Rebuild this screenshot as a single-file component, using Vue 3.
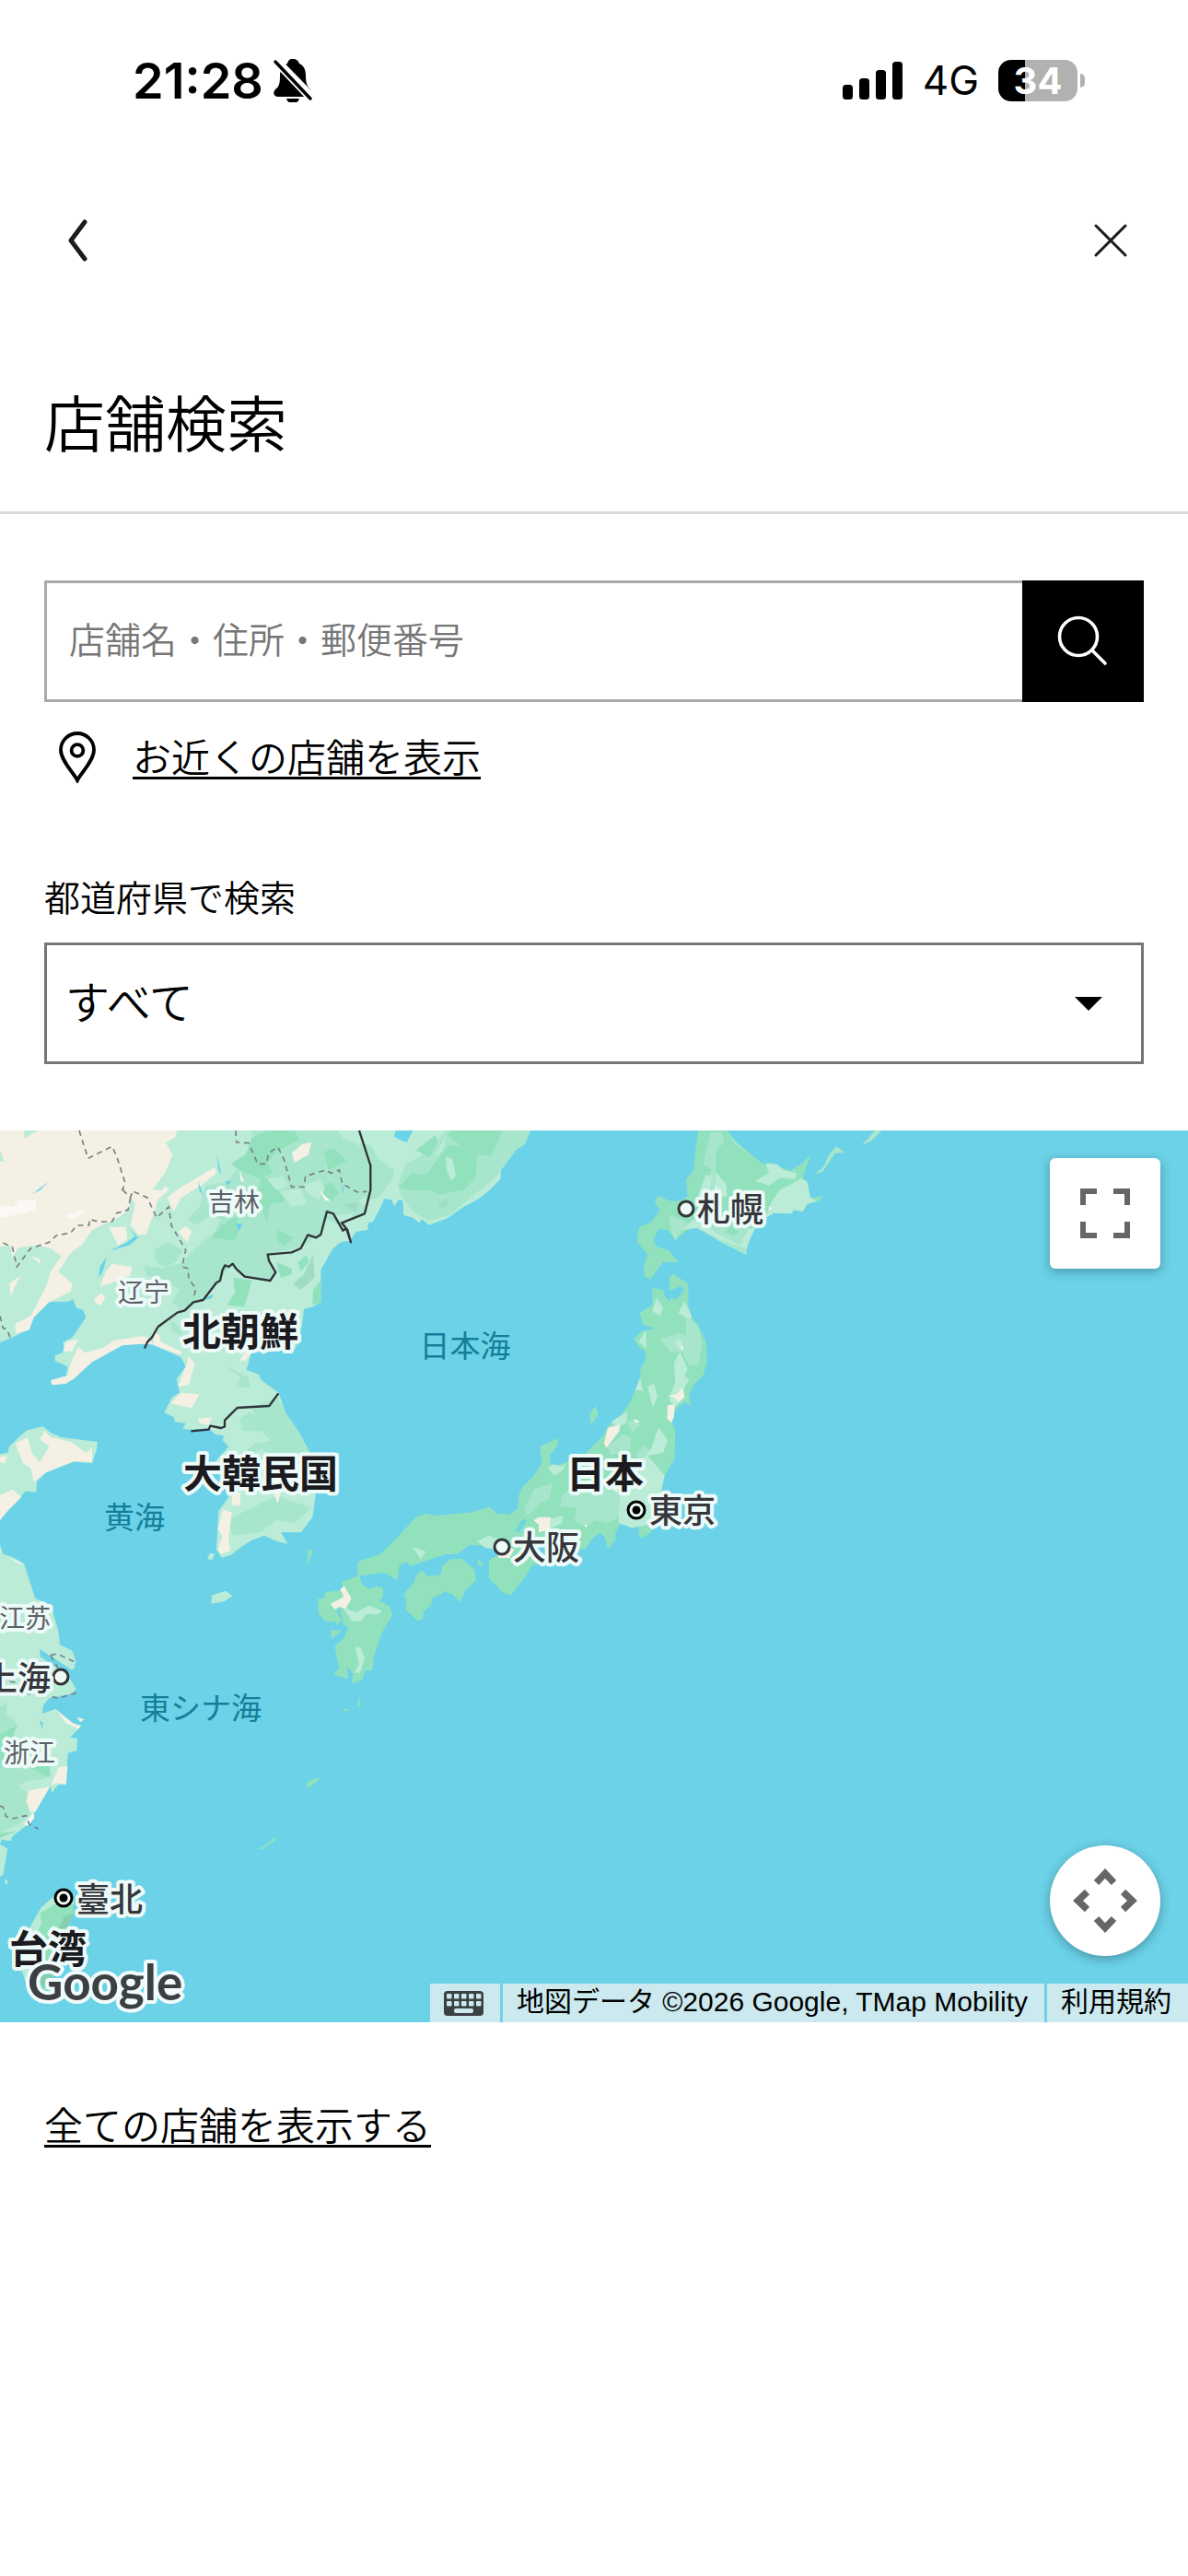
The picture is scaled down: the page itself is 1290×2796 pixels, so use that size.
<script setup>
    import { ref } from 'vue';

    const keyword = ref('');
    const prefecture = ref('all');

    // Столбики уровня сигнала
    const signalBars = [16, 23, 32, 41];

    // Подписи на карте: тип определяет размер и цвет
    const labels = [
        { text: '吉林', x: 254, y: 88, type: 'province' },
        { text: '辽宁', x: 156, y: 186, type: 'province' },
        { text: '江苏', x: 27, y: 540, type: 'province' },
        { text: '浙江', x: 32, y: 686, type: 'province' },
        { text: '日本海', x: 505, y: 246, type: 'sea' },
        { text: '黄海', x: 146, y: 432, type: 'sea' },
        { text: '東シナ海', x: 218, y: 639, type: 'sea' },
        { text: '札幌', x: 793, y: 99, type: 'city' },
        { text: '東京', x: 741, y: 426, type: 'city' },
        { text: '大阪', x: 593, y: 466, type: 'city' },
        { text: '上海', x: 19, y: 608, type: 'city' },
        { text: '臺北', x: 119, y: 848, type: 'city' },
        { text: '北朝鮮', x: 261, y: 234, type: 'country' },
        { text: '大韓民国', x: 283, y: 388, type: 'country' },
        { text: '日本', x: 657, y: 388, type: 'country' },
        { text: '台湾', x: 52, y: 904, type: 'country' },
    ];

    const cities = [
        { x: 745, y: 85 },
        { x: 545, y: 452 },
        { x: 66, y: 593 },
    ];
    const capitals = [
        { x: 691, y: 412 },
        { x: 69, y: 833 },
    ];
</script>

<template>
    <div class="page">
        <div class="status">
            <div class="status-left">
                <span class="time">21:28</span>
                <svg width="44" height="48" viewBox="0 0 44 48" aria-hidden="true">
                    <path d="M22 1C26 1 28 3 29 6C34 8 36 13 36 19C36 28 38 31 41 34C44 38 42 42 38 42H6C1 42 0 37 3 34C7 31 8 28 8 19C8 13 11 8 16 6C17 3 18 1 22 1Z" fill="#000" />
                    <path d="M15 44H29C28 48 25 49 22 49C19 49 16 48 15 44Z" fill="#000" />
                    <path d="M5 1L46 43" stroke="#fff" stroke-width="5" />
                    <path d="M3 4L41 44" stroke="#fff" stroke-width="7" />
                    <path d="M3 4L41 44" stroke="#000" stroke-width="3.5" stroke-linecap="round" />
                </svg>
            </div>
            <div class="status-right">
                <svg width="66" height="42" viewBox="0 0 66 42" aria-hidden="true">
                    <rect v-for="(h, i) in signalBars" :key="i" :x="i * 18" :y="42 - h" width="11" :height="h" rx="3.5" />
                </svg>
                <span class="network">4G</span>
                <div class="battery">
                    <div class="battery-body">34</div>
                    <div class="battery-tip"></div>
                </div>
            </div>
        </div>

        <nav class="nav">
            <button type="button" aria-label="戻る">
                <svg width="24" height="48" viewBox="0 0 24 48" aria-hidden="true">
                    <path d="M20 4L5 24L20 44" fill="none" stroke="#1c1c1c" stroke-width="5" stroke-linecap="round" stroke-linejoin="round" />
                </svg>
            </button>
            <button type="button" aria-label="閉じる">
                <svg width="36" height="36" viewBox="0 0 36 36" aria-hidden="true">
                    <path d="M2 2L34 34M34 2L2 34" stroke="#1c1c1c" stroke-width="3" stroke-linecap="round" />
                </svg>
            </button>
        </nav>

        <h1>店舗検索</h1>

        <main>
            <form class="search" @submit.prevent>
                <input v-model="keyword" type="text" placeholder="店舗名・住所・郵便番号" aria-label="店舗名・住所・郵便番号">
                <button type="submit" aria-label="検索">
                    <svg width="56" height="56" viewBox="0 0 56 56" aria-hidden="true">
                        <g fill="none" stroke="#fff" stroke-width="3.6" stroke-linecap="round">
                            <circle cx="23" cy="23" r="20.5" />
                            <path d="M38 38L52 52" />
                        </g>
                    </svg>
                </button>
            </form>

            <div class="nearby">
                <svg width="42" height="56" viewBox="0 0 42 56" aria-hidden="true">
                    <g fill="none" stroke="#000" stroke-width="3.8">
                        <path d="M21 53C18 46 3 32 3 20A18 18 0 0 1 39 20C39 32 24 46 21 53Z" />
                        <circle cx="21" cy="20.5" r="6.4" />
                    </g>
                </svg>
                <a href="#">お近くの店舗を表示</a>
            </div>

            <label class="label" for="prefecture">都道府県で検索</label>
            <div class="select">
                <select id="prefecture" v-model="prefecture">
                    <option value="all">すべて</option>
                </select>
                <svg width="30" height="15" viewBox="0 0 30 15" aria-hidden="true"><path d="M0 0H30L15 15Z" /></svg>
            </div>
        </main>

        <section class="map">
            <svg class="canvas" viewBox="0 0 1290 968" preserveAspectRatio="xMidYMid slice">
                <g transform="scale(.33333)">
                    <!-- Материк и Корейский полуостров -->
                    <g transform="translate(0 -21)">
                        <path class="land" d="M0 21H1727L1710 65L1680 85L1655 120L1632 150L1630 180L1590 220L1560 243L1510 270L1460 305L1430 317L1397 329L1375 310L1365 322L1345 305L1315 297L1312 250L1300 245L1285 268L1275 247L1252 243L1240 270L1215 318L1200 322L1197 345L1160 350L1140 380L1110 385L1085 405L1045 475L1045 580L1020 595L990 603L985 650L975 700L960 735L820 740L803 800L843 815L852 835L908 875L930 940L975 1005L1007 1065L1010 1090L1028 1210L1018 1280L980 1330L915 1330L938 1368L905 1360L860 1340L820 1355L790 1375L750 1405L722 1412L705 1385L712 1260L745 1215L720 1160L700 1100L745 1050L725 1030L730 1015L700 1010L680 990L625 995L595 993L605 975L570 970L567 955L535 940L560 890L585 875L575 830L605 790L590 760L500 720L470 715L400 720L300 775L240 825L215 845L170 850L165 835L215 820L220 790L180 772L178 755L210 740L205 710L235 695L280 630L270 605L250 600L237 570L225 578L160 580L110 630L95 670L50 690L0 712Z" />
                        <path class="land" d="M0 1075L25 1070L30 1050L85 998L140 985L165 1005L200 1020L318 1035L315 1060L300 1105L240 1100L150 1135L120 1165L118 1200L85 1195L60 1220L20 1265L0 1290Z" />
                        <path class="land" d="M675 1415L685 1397L700 1400L690 1420Z" />
                        <!-- Леса -->
                        <path class="mid" d="M820 21H1100L1120 50L1160 60L1200 120L1205 220L1170 250L1200 280L1110 330L1060 310L1040 360L980 400L870 425L895 480L870 510L790 495L750 460L715 510L660 575L590 605L560 580L585 540L520 500L480 495L465 460L530 470L600 450L620 420L700 350L720 310L680 300L640 330L610 310L650 270L670 200L740 190L770 150L755 125L800 100L820 70Z" />
                        <path class="mid" d="M500 410L545 385L595 410L570 450L540 470L510 450ZM555 640L585 660L590 690L560 670ZM760 370L800 360L805 390L775 400ZM1170 60L1210 70L1230 110L1285 150L1280 180L1230 240L1195 250Z" />
                        <path class="mid" d="M905 890L930 940L975 1005L1007 1065L900 1080L850 1060L780 1080L830 1040L880 1030L850 1000L790 1000L780 960L850 910ZM740 1290L820 1250L900 1210L1015 1250L960 1300L900 1290L850 1330L760 1340ZM730 785L810 825L815 860L770 855L785 825Z" />
                        <path class="green" d="M820 45L870 21H960L975 50L900 90L870 130L890 160L860 170L910 220L960 225L920 255L880 260L870 320L840 240L850 180L800 160L755 130L800 100ZM720 330L770 300L780 340L765 380L690 370ZM760 500L820 510L810 550L795 595L740 590L765 550ZM905 345L955 370L925 400L900 375ZM900 450L950 470L950 490L915 500ZM1055 90L1090 80L1130 120L1070 150ZM1050 200L1080 190L1105 225L1080 250L1055 230ZM970 450L1000 425L1005 450L980 480ZM1020 540L1045 510L1045 580L1018 590Z" />
                        <path class="shade" d="M955 520L990 490L1020 425L1025 500L980 540ZM1120 260L1165 255L1160 290Z" />
                        <path class="land" d="M870 180L920 170L940 205L900 215ZM990 200L1040 180L1060 210L1040 245L1000 225ZM1085 300L1150 290L1130 330ZM910 220L980 210L1000 260L950 270Z" />
                        <!-- Русское побережье -->
                        <path class="mid" d="M1450 21H1727L1710 65L1680 85L1655 120L1632 150L1610 180L1550 225L1470 295L1400 315L1350 290L1310 240L1295 200L1320 130L1400 90Z" />
                        <path class="green" d="M1455 35L1470 21H1637L1600 105L1555 100L1550 175L1510 215L1430 230L1400 215L1330 215L1300 205L1340 160L1390 165L1460 70L1500 70ZM1355 85L1420 35L1425 60L1400 110Z" />
                        <path class="land" d="M1452 105L1475 115L1485 170L1470 185L1455 150ZM1400 110L1440 90L1455 30L1430 80L1390 130Z" />
                        <path class="shade" d="M1430 260L1460 240L1455 265L1430 275Z" />
                        <!-- Степь и сухие районы -->
                        <path class="sand" d="M0 21H577L570 45L540 60L562 100L540 155L497 213L525 215L540 202L550 215L515 245L500 295L475 360L450 360L425 330L440 260L425 235L420 280L385 305L300 345L270 390L230 420L190 480L235 520L230 545L160 580L110 630L95 670L50 682L50 650L100 625L150 530L165 480L200 430L165 405L125 395L60 402L40 435L0 460Z" />
                        <path class="land" d="M77 21H123L80 48ZM0 85L15 125L0 120ZM0 400L35 395L40 440L0 470Z" />
                        <path class="sand" d="M545 240L575 215L700 140L705 160L655 200L590 240L565 285ZM950 95L985 65L1015 60L1005 100L960 125ZM580 350L605 333L625 350L610 385ZM355 335L410 335L415 375L385 395ZM365 455L430 465L425 495L325 530L345 480ZM308 570L330 550L342 565L330 590L310 583ZM100 430L130 440L130 455ZM30 520L65 495L35 560ZM500 675L520 690L525 710L590 740L590 752L500 720ZM205 740L215 710L255 700L235 740ZM470 690L500 715L400 720L300 775L240 830L215 845L170 850L165 835L220 820L230 780L255 725L275 745L335 730L370 705ZM615 757L635 780L615 850L580 855L605 790ZM555 910L590 875L650 880L625 925ZM645 960L690 955L680 980L650 975ZM780 770L800 740L820 745L800 770ZM725 1255L755 1265L745 1350L750 1390L720 1400L710 1385L725 1340L710 1320ZM755 1200H785L780 1245L755 1240ZM890 1200H915L905 1235Z" />
                        <path class="sand" d="M50 1040L90 1020L105 1075L130 1100L160 1050L130 1025L145 1000L165 1020L230 1035L280 1070L300 1055L300 1100L240 1097L150 1135L110 1165L100 1120L75 1105ZM0 1085L25 1078L15 1105L0 1100ZM0 1210L40 1190L70 1215L20 1265L0 1290Z" />
                        <path class="snow" d="M0 265L45 270L60 248L120 250L115 280L70 292L0 305ZM210 300L260 280L275 285L240 310ZM780 150L795 190L785 185ZM1040 215L1075 250L1060 250ZM815 930L830 945L820 940Z" />
                        <!-- Озёра -->
                        <path class="water" d="M1290 21H1345L1325 60L1300 50L1283 40ZM706 95L722 168L712 150ZM733 185H755L740 200ZM645 185L662 230L650 218ZM105 228L158 188L130 216ZM355 413L410 388L440 365L418 335L450 370L420 395ZM322 500L325 465L348 432L335 480ZM770 325H790L778 350ZM1112 190L1120 215L1116 230ZM670 565L695 555L690 568L670 572Z" />
                        <!-- Границы провинций -->
                        <path class="dashed" d="M258 21L270 60L287 112L365 73L380 105L407 190L400 215L388 208M400 215L425 240L432 218L480 240L510 305L550 270L558 330L605 410L593 465L612 470L615 505L638 535L630 570M425 240L417 280L380 290L365 318L320 318L292 310L290 330L250 330L230 355L185 362L160 385L100 405L55 465L40 400L0 383M0 625L10 665L22 668L35 700M768 21L770 60L810 62L840 130L868 130L875 95L905 75L925 115L950 205L990 205L995 170L1060 150L1080 160L1105 150L1115 195L1165 222L1195 220" />
                        <!-- Государственные границы -->
                        <path class="border" d="M1170 21L1207 135V215L1188 292L1113 322L1132 345L1143 385L1128 340L1117 347L1086 292L1065 285L1045 360L1030 370L1003 361L980 405L950 418L872 425L876 445L898 483L880 510L797 497L770 472L758 455L745 465L733 460L725 475L717 510L705 517L662 573L630 580L602 607L578 614L515 660L495 695L480 710L471 731" />
                        <path class="border" d="M907 877L877 918L773 924L732 965V985L720 990L685 983L680 995L622 1000" />
                        <path class="green" d="M1003 1385L1018 1390L1003 1440Z" />
                    </g>

                    <!-- Восточный Китай, Тайвань, острова -->
                    <g transform="translate(0 1419)">
                        <path class="land" d="M0 -70L10 -40L40 -30L78 -10L115 105L165 125L190 210L195 255L235 275L248 312L240 325L248 325L235 338L130 270L132 295L175 325L215 345L248 400L235 415L160 430L140 455L138 480L180 465L235 510L265 520L228 558L252 560L250 600L222 608L218 650L215 710L190 712L168 738L165 715L110 800L85 845L40 880L35 895L5 890L0 905L25 920L10 1005L0 1010Z" />
                        <path class="mid" d="M0 455L25 445L20 480L60 515L45 550L115 565L165 650L165 685L130 695L90 700L60 715L90 740L95 810L60 840L0 870Z" />
                        <path class="green" d="M0 550L55 515L40 560L65 590L0 660ZM100 655L160 650L165 685L140 680ZM0 870L55 862L0 885Z" />
                        <path class="sand" d="M190 655L220 650L215 712L190 705L165 715L115 800L100 800L85 765L95 730L165 718ZM180 465L240 512L265 520L255 530L215 510ZM250 492L275 498L262 508Z" />
                        <path class="snow" d="M78 840L110 800L112 820L90 845ZM30 -28L75 0L60 -15Z" />
                        <path class="water" d="M128 500L140 510L138 530Z" />
                        <path class="dashed" d="M165 290L185 285L250 315M165 290L190 335M0 372L50 378L100 420M170 425L190 430L250 412M0 780L10 785L20 815L40 822L85 812L95 840L125 855" />
                        <path class="land" d="M175 1075L240 1085L240 1130L200 1230L170 1340L130 1425L90 1380L70 1310L100 1170L135 1110Z" />
                        <path class="green" d="M180 1100H240V1130L200 1230L170 1340L130 1425L125 1340L140 1250L115 1200L135 1165L130 1130Z" />
                        <path class="shade dark" d="M210 1140L240 1130L220 1180H190ZM160 1310L180 1330L140 1375L125 1340Z" />
                        <path class="land" d="M690 95L735 80L758 97L730 115L688 122ZM18 1015L28 1035L15 1032Z" />
                        <!-- Кюсю -->
                        <path class="green" d="M1170 30L1115 50L1113 78L1060 85L1055 105L1035 105L1038 155L1060 180L1090 180L1100 192L1112 175L1098 150L1105 130L1118 190L1135 198L1120 235L1090 262L1105 335L1088 345L1093 355L1135 368L1130 325L1150 350L1145 382L1180 370L1190 340L1212 340L1222 280L1245 215L1278 160L1270 130L1235 112L1248 98V70L1230 65L1205 75L1180 60ZM1077 208L1115 208L1080 238ZM1172 420V460L1163 455ZM1113 462L1138 465L1130 475ZM998 705L1035 688L1040 695L1003 725ZM840 922L870 905L898 880L897 892L855 922Z" />
                        <path class="sand" d="M1108 75L1122 65L1145 105L1125 140L1108 132L1090 140L1077 122L1120 100Z" />
                        <path class="land" d="M1118 135L1160 150L1200 128L1245 145L1230 158L1195 155L1175 180L1145 178ZM1157 262L1175 265L1188 300L1172 348L1155 345L1170 320Z" />
                    </g>

                    <!-- Хонсю, Сикоку, Хоккайдо -->
                    <g transform="translate(1290 -21)">
                        <path class="green" d="M985 21H1080L1105 55L1195 130L1215 125L1240 135L1285 152L1320 130L1350 103L1325 175L1340 190L1350 240L1393 235L1375 252L1340 260L1325 285L1295 280L1290 292L1230 290L1210 300L1165 345L1150 375L1140 425L1050 380L980 338L950 345L910 378L885 345L855 343L838 378L850 400L890 412L920 450L870 450L828 507L808 495V460L820 425L785 385L792 335L830 320L860 280L842 255L853 233L890 250L930 250L950 235L945 180L970 150L975 90Z" />
                        <path class="mid" d="M1025 30L1060 25L1070 60L1045 80L1040 150L1075 220L1050 250L1000 260L1010 220L990 220L1030 150L1000 130ZM890 295L950 320L930 350L910 378L895 350ZM1000 335L1130 335L1165 345L1150 375L1140 425L1050 380ZM1075 21L1100 50L1145 95L1105 65Z" />
                        <path class="land" d="M1170 185L1215 160L1205 130L1240 130L1260 150L1305 160L1300 180L1250 175L1215 200ZM1225 250L1250 215L1320 178L1340 190L1350 240L1370 250L1340 260L1325 285L1295 280L1290 292L1230 290L1200 310ZM985 230L1010 165L1030 170L1020 220L990 250ZM1040 155L1075 195L1078 235L1050 240ZM930 345L970 310L1070 370L1120 395L1150 340L1170 340L1140 405L1050 375L980 338Z" />
                        <path class="green" d="M1070 350L1090 335L1120 350L1100 365Z" />
                        <path class="mid" d="M1363 165L1390 155L1430 95L1463 92L1435 73L1410 100L1395 135ZM1515 70L1540 45L1560 21H1582L1550 55Z" />

                        <path class="green" d="M835 535L870 540L875 560L892 580L895 565L915 572L938 540L930 528L892 542L890 500L900 487L952 520V590L965 630L985 655L1010 710L1013 770L1003 815L970 850L955 880L960 918L940 905L910 930L900 975L910 1000L908 1090L890 1120L870 1160L865 1190L850 1290L830 1330L800 1350L790 1330L795 1290L770 1315L730 1300L715 1330V1355L690 1385L680 1345L665 1330L640 1350L615 1385L580 1380L560 1400L440 1440L425 1469L390 1515L373 1535L345 1525L330 1505L303 1480V1420L340 1400L330 1385L290 1375L240 1370L200 1400L160 1402L45 1440L35 1425L10 1440L5 1485L-40 1460L-125 1472V1425L-50 1400L0 1350L65 1280L95 1268L130 1275L240 1265L305 1247L330 1268L370 1272L398 1250L400 1210L410 1185L445 1150L475 1105L470 1050L530 1022L525 1050L500 1080L505 1115L545 1105L620 1070L675 1015L690 985L740 940L765 900L795 830L797 795L815 765L812 740L790 725L775 700L800 675L845 665L805 655L793 615L835 590Z" />
                        <path class="green" d="M632 940L652 918L658 945L645 970L632 975ZM270 1412L285 1440L265 1435ZM150 1440L175 1418L215 1415L255 1450L262 1485L225 1520L210 1558L185 1532L160 1523L118 1545L115 1565L90 1590L88 1610L70 1617L30 1580L35 1550L25 1532L60 1490L65 1470L83 1452L103 1472L145 1468Z" />
                        <path class="mid" d="M860 700L920 680L945 690L945 635L965 640L985 660L998 720L985 785L955 785L930 740L895 745ZM690 1050L740 1010L765 1020L765 1060L700 1080ZM755 970L780 960L795 980L770 1005ZM450 1190L510 1170L500 1220L470 1235L430 1275L418 1255ZM540 1210L600 1160L730 1180L725 1280L690 1300L650 1290L620 1310L580 1290L590 1250L535 1245ZM780 1075L810 1045L830 1070L800 1100Z" />
                        <path class="land" d="M850 565L870 600L860 625L835 610ZM940 575L962 625L960 640L920 615ZM925 740L950 800L940 820L955 835L935 865L940 890L905 925L890 895L910 840L905 780ZM905 710L930 700L935 730L925 740ZM815 670V730L790 710ZM795 825L805 870L780 865ZM820 855L840 845L852 885L837 925L828 890ZM855 988L885 1030L870 1070L820 1080L875 1145L865 1190L845 1300L795 1310L770 1315L725 1300L730 1170L800 1100L830 1060ZM755 935L750 975L720 985L700 970ZM495 1120L510 1108L540 1115L555 1105L540 1130L515 1145ZM505 1285L545 1275L540 1300L500 1320ZM265 1358L300 1340L330 1350L325 1385L290 1380ZM55 1377L98 1393L80 1418Z" />
                        <path class="sand" d="M885 885L915 880L935 858L940 890L920 905L905 890ZM885 915H908L905 955L897 973L883 960ZM690 990L730 978L728 1000L685 1055L678 1040ZM448 1290L465 1280H505L500 1320L465 1330L465 1305ZM330 1395L360 1375L385 1385L370 1413H335ZM700 1185L725 1180L720 1200Z" />
                        <path class="water" d="M385 1328L415 1285L425 1293L402 1328ZM455 1375L485 1375L480 1400H455Z" />
                        <path class="snow" d="M930 715L937 735L929 732ZM1040 195L1048 215L1040 212ZM1215 265L1225 280L1215 278ZM775 960L795 970L780 972ZM615 1305L625 1308L615 1313Z" />
                    </g>
                </g>

                <circle v-for="c in cities" :key="c.x" class="dot" :cx="c.x" :cy="c.y" r="8" />
                <g v-for="c in capitals" :key="c.x">
                    <circle class="dot capital" :cx="c.x" :cy="c.y" r="9" />
                    <circle :cx="c.x" :cy="c.y" r="4.5" />
                </g>
                <text v-for="l in labels" :key="l.text" :x="l.x" :y="l.y" :class="l.type">{{ l.text }}</text>
                <text class="google" x="30" y="944">Google</text>
            </svg>

            <button class="map-btn fullscreen" type="button" aria-label="全画面表示">
                <svg width="54" height="54" viewBox="0 0 54 54" aria-hidden="true">
                    <path d="M3 18V3H18M36 3H51V18M51 36V51H36M18 51H3V36" fill="none" stroke="#666" stroke-width="6" />
                </svg>
            </button>
            <button class="map-btn pan" type="button" aria-label="地図のカメラ コントロール">
                <svg width="70" height="70" viewBox="0 0 70 70" aria-hidden="true">
                    <path d="M25.500 15.500L35 5.500L44.500 15.500M54.500 25.500L64.500 35L54.500 44.500M44.500 54.500L35 64.500L25.500 54.500M15.500 44.500L5.500 35L15.500 25.500" fill="none" stroke="#666" stroke-width="7.500" />
                </svg>
            </button>

            <div class="credits">
                <button type="button" aria-label="キーボード ショートカット">
                    <svg width="43" height="27" viewBox="0 0 43 27" aria-hidden="true">
                        <rect width="43" height="27" rx="4" fill="#3c4043" />
                        <g fill="#cbe9ee">
                            <template v-for="row in 2" :key="row">
                                <rect v-for="col in 5" :key="col" :x="col * 8 - 5" :y="row * 8 - 5" width="5.5" height="5.5" rx="1" />
                            </template>
                            <rect x="11" y="19" width="21" height="5" rx="2" />
                        </g>
                    </svg>
                </button>
                <span>地図データ ©2026 Google, TMap Mobility</span>
                <a href="#">利用規約</a>
            </div>
        </section>

        <div class="all">
            <a href="#">全ての店舗を表示する</a>
        </div>
    </div>
</template>

<style>
    body {
        background: #fff;
    }
</style>

<style scoped>
    .page {
        color: #000;
        font-family: "Liberation Sans", "Noto Sans CJK JP", sans-serif;
        font-weight: 350;
    }

    svg {
        display: block;
        flex: none;
    }

    button {
        display: flex;
        align-items: center;
        justify-content: center;
        padding: 0;
        border: 0;
        background: none;
    }

    a {
        color: inherit;
    }

    .status {
        display: flex;
        align-items: center;
        justify-content: space-between;
        height: 174px;
        padding: 0 112px 0 144px;
        font-family: Inter, sans-serif;
    }

    .status-left,
    .status-right {
        display: flex;
        align-items: center;
    }

    .status-left {
        gap: 10px;
    }

    .status-right {
        gap: 21px;
    }

    .time {
        font-size: 54px;
        font-weight: 600;
    }

    .network {
        font-size: 44px;
        font-weight: 400;
    }

    .battery {
        display: flex;
        align-items: center;
        gap: 3px;
    }

    .battery-body {
        width: 86px;
        height: 45px;
        border-radius: 14px;
        background: linear-gradient(90deg, #000 34%, #b1b1b1 34%);
        color: #fff;
        font-size: 40px;
        font-weight: 700;
        line-height: 45px;
        text-align: center;
    }

    .battery-tip {
        width: 5px;
        height: 15px;
        border-radius: 0 8px 8px 0;
        background: #b1b1b1;
    }

    .nav {
        display: flex;
        align-items: center;
        justify-content: space-between;
        height: 174px;
        padding: 0 66px 0 72px;
    }

    h1 {
        margin: 0;
        padding: 66px 48px 45px;
        border-bottom: 3px solid #dbdbdb;
        font-size: 66px;
        font-weight: 350;
        line-height: 96px;
    }

    main {
        padding: 72px 48px;
    }

    .search {
        display: flex;
        height: 132px;
    }

    .search input {
        flex: 1;
        min-width: 0;
        padding: 0 24px;
        border: 3px solid #aaa;
        border-right: 0;
        border-radius: 0;
        background: #fff;
        font: inherit;
        font-size: 39px;
    }

    .search input::placeholder {
        color: #767676;
    }

    .search button {
        width: 132px;
        background: #000;
    }

    .nearby {
        display: flex;
        align-items: center;
        gap: 39px;
        padding: 28px 15px 0;
    }

    .nearby a,
    .all a {
        padding-top: 4px;
        font-size: 42px;
        line-height: 60px;
        text-decoration-thickness: 3px;
        text-underline-offset: 5px;
        text-decoration-skip-ink: none;
    }

    .label {
        display: block;
        margin-top: 92px;
        font-size: 39px;
        line-height: 60px;
    }

    .select {
        display: flex;
        position: relative;
        align-items: center;
        height: 132px;
        margin-top: 17px;
    }

    .select select {
        width: 100%;
        height: 100%;
        padding: 0 20px;
        border: 3px solid #767676;
        border-radius: 0;
        background: #fff;
        color: #000;
        font: inherit;
        font-size: 48px;
        appearance: none;
    }

    .select svg {
        position: absolute;
        right: 45px;
        pointer-events: none;
    }

    .map {
        position: relative;
        overflow: hidden;
        aspect-ratio: 1290 / 968;
        background: #6bd2e8;
    }

    .canvas {
        width: 100%;
        height: 100%;
    }

    .land { fill: #bbecd8; }
    .mid { fill: #a7e6cd; }
    .green { fill: #91e1bd; }
    .shade { fill: #9fdcc3; }
    .dark { fill: #83cfaf; }
    .sand { fill: #f5f0e4; }
    .snow { fill: #fbf9f5; }
    .water { fill: #6bd2e8; }

    .border {
        fill: none;
        stroke: #303338;
        stroke-width: 7;
        stroke-linejoin: round;
    }

    .dashed {
        fill: none;
        stroke: #7b8085;
        stroke-width: 5;
        stroke-dasharray: 18 14;
    }

    .dot {
        fill: #eefaf5;
        stroke: #333438;
        stroke-width: 3;
    }

    .capital {
        stroke: #000;
    }

    .map text {
        font-family: "Noto Sans CJK JP", "Noto Sans CJK SC", sans-serif;
        text-anchor: middle;
        paint-order: stroke;
        stroke: #ecfaf8;
        stroke-linejoin: round;
        stroke-width: 8px;
    }

    .map .province {
        fill: #5d6066;
        font-family: "Noto Sans CJK SC", sans-serif;
        font-size: 28px;
        font-weight: 400;
    }

    .map .sea {
        fill: #137f98;
        stroke: none;
        font-size: 33px;
        font-weight: 400;
    }

    .map .city {
        fill: #36363b;
        font-size: 36px;
        font-weight: 500;
    }

    .map .country {
        fill: #1b1b1f;
        font-size: 42px;
        font-weight: 700;
    }

    .map .google {
        fill: #3c4043;
        stroke: #f2fbfd;
        font-family: Lato, sans-serif;
        font-size: 53px;
        font-weight: 700;
        text-anchor: start;
    }

    .map-btn {
        position: absolute;
        right: 30px;
        width: 120px;
        height: 120px;
        background: #fff;
        box-shadow: 0 3px 12px rgba(0, 0, 0, 0.3);
    }

    .fullscreen {
        top: 30px;
        border-radius: 6px;
    }

    .pan {
        bottom: 72px;
        border-radius: 50%;
    }

    .credits {
        display: flex;
        position: absolute;
        right: 0;
        bottom: 0;
        gap: 3px;
        height: 42px;
        font-size: 30px;
        font-weight: 400;
        line-height: 40px;
        white-space: nowrap;
    }

    .credits > * {
        padding: 0 18px 0 15px;
        background: #cbe9ee;
        text-decoration: none;
    }

    .all {
        padding: 84px 48px;
    }
</style>
